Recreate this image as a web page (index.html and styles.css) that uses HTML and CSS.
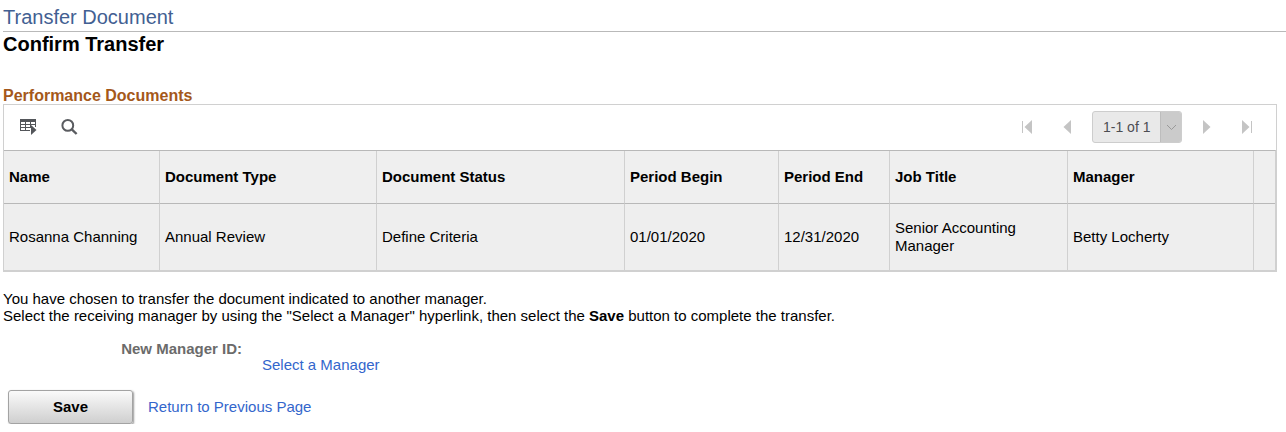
FILE: index.html
```html
<!DOCTYPE html>
<html lang="en">
<head>
<meta charset="utf-8">
<title>Transfer Document</title>
<link rel="stylesheet" href="styles.css">
</head>
<body>
<main class="page">
  <h1 class="page-title">Transfer Document</h1>
  <h2 class="page-subtitle">Confirm Transfer</h2>

  <section class="documents">
    <h3 class="group-title" id="documents-title">Performance Documents</h3>
    <div class="grid">
      <div class="toolbar">
        <div class="tools">
          <button class="icon-button" type="button" aria-label="Grid actions">
            <svg width="17" height="16" viewBox="0 0 17 16" fill="#53565a">
              <path d="M0 0H16V3H0ZM0 3H1V12H0ZM5 3H6V12H5ZM10 3H11V9H10ZM15 3H16V8H15ZM1 5H15V6H1ZM1 8H10V9H1ZM1 11H10V12H1Z"/>
              <path d="M11 6L16.500 11L11 16Z"/>
            </svg>
          </button>
          <button class="icon-button" type="button" aria-label="Find">
            <svg width="17" height="16" viewBox="0 0 17 16" fill="none" stroke="#5a5c60">
              <circle cx="6.8" cy="6.4" r="5.4" stroke-width="2"/>
              <path d="M10.8 10.4L15.6 15" stroke-width="2.4"/>
            </svg>
          </button>
        </div>
        <nav class="pager" aria-label="Rows">
          <div class="page-buttons">
            <button class="page-button" type="button" aria-label="First" disabled>
              <svg width="12" height="14" viewBox="0 0 12 14" fill="#c4c4c4"><path d="M1 1H2V13H1ZM11 0V14L3.500 7Z"/></svg>
            </button>
            <button class="page-button" type="button" aria-label="Previous" disabled>
              <svg width="12" height="14" viewBox="0 0 12 14" fill="#c4c4c4"><path d="M10 0V14L2.500 7Z"/></svg>
            </button>
          </div>
          <div class="range">
            <select class="range-select" aria-label="Row range" disabled><option>1-1 of 1</option></select>
            <span class="range-arrow">
              <svg width="11" height="7" viewBox="0 0 11 7" fill="none" stroke="#999"><path d="M1 1L5.500 5.500L10 1"/></svg>
            </span>
          </div>
          <div class="page-buttons">
            <button class="page-button" type="button" aria-label="Next" disabled>
              <svg width="12" height="14" viewBox="0 0 12 14" fill="#c4c4c4"><path d="M2 0V14L9.500 7Z"/></svg>
            </button>
            <button class="page-button" type="button" aria-label="Last" disabled>
              <svg width="12" height="14" viewBox="0 0 12 14" fill="#c4c4c4"><path d="M10 1H11V13H10ZM1 0V14L8.500 7Z"/></svg>
            </button>
          </div>
        </nav>
      </div>
      <table class="table" aria-labelledby="documents-title">
        <colgroup>
          <col class="col-name"><col class="col-type"><col class="col-status"><col class="col-begin">
          <col class="col-end"><col class="col-job"><col class="col-manager"><col class="col-extra">
        </colgroup>
        <thead>
          <tr>
            <th scope="col">Name</th>
            <th scope="col">Document Type</th>
            <th scope="col">Document Status</th>
            <th scope="col">Period Begin</th>
            <th scope="col">Period End</th>
            <th scope="col">Job Title</th>
            <th scope="col">Manager</th>
            <td></td>
          </tr>
        </thead>
        <tbody>
          <tr>
            <td>Rosanna Channing</td>
            <td>Annual Review</td>
            <td>Define Criteria</td>
            <td>01/01/2020</td>
            <td>12/31/2020</td>
            <td>Senior Accounting Manager</td>
            <td>Betty Locherty</td>
            <td></td>
          </tr>
        </tbody>
      </table>
    </div>
  </section>

  <p class="instructions">You have chosen to transfer the document indicated to another manager.<br>
    Select the receiving manager by using the "Select a Manager" hyperlink, then select the <b>Save</b> button to complete the transfer.</p>

  <div class="manager">
    <span class="manager-label">New Manager ID:</span>
    <a class="link manager-link" href="#select">Select a Manager</a>
  </div>

  <div class="actions">
    <button class="save" type="button">Save</button>
    <a class="link" href="#previous">Return to Previous Page</a>
  </div>
</main>
</body>
</html>
```
FILE: styles.css
```css
* { box-sizing: border-box; }

body {
  margin: 0;
  background: #fff;
  color: #000;
  font: 15px/17px "Liberation Sans", Arial, sans-serif;
}

h1, h2, h3, p { margin: 0; }

button, select { font: inherit; }

.page { padding: 3px 0 0 3px; }

.page-title {
  border-bottom: 1px solid #b9b9b9;
  color: #426092;
  font-size: 20px;
  font-weight: normal;
  line-height: 28px;
}

.page-subtitle {
  font-size: 20px;
  line-height: 24px;
}

.documents {
  margin: 31px 9px 0 0;
}

.group-title {
  color: #a4581a;
  font-size: 16px;
  line-height: 17px;
}

.grid { border: 1px solid #d0d0d0; border-bottom: 0; }

.toolbar {
  display: flex;
  align-items: center;
  justify-content: space-between;
  height: 45px;
  padding: 0 23px 1px 16px;
}

.tools, .pager, .page-buttons {
  display: flex;
  align-items: center;
}

.tools { gap: 24px; }

.pager { gap: 19px; }

.page-buttons { gap: 28px; }

.icon-button, .page-button {
  display: flex;
  padding: 0;
  border: 0;
  background: none;
}

.range {
  display: flex;
  height: 32px;
  border: 1px solid #cdcdcd;
  border-radius: 3px;
  background: #e9e9e9;
  overflow: hidden;
}

.range-select {
  width: 67px;
  padding: 0 0 0 10px;
  border: 0;
  background: none;
  color: #4c4d52;
  font-size: 14px;
  opacity: 1;
  appearance: none;
}

.range-arrow {
  display: flex;
  align-items: center;
  justify-content: center;
  width: 21px;
  border-left: 1px solid #bdbdbd;
  background: #cbcbcb;
}

.table {
  width: 100%;
  table-layout: fixed;
  border-spacing: 0;
  border-top: 1px solid #b8b8b8;
  border-right: 1px solid #d0d0d0;
  border-bottom: 2px solid #d0d0d0;
  background: #eee;
}

.col-name { width: 155px; }
.col-type { width: 217px; }
.col-status { width: 248px; }
.col-begin { width: 154px; }
.col-end { width: 111px; }
.col-job { width: 178px; }
.col-manager { width: 186px; }
.col-extra { width: 22px; }

.table th, .table td {
  padding: 0 5px;
  border-left: 1px solid #d0d0d0;
  text-align: left;
  line-height: 18px;
}

.table tr > :first-child { border-left: 0; }

.table thead th, .table thead td {
  height: 53px;
  border-bottom: 1px solid #b8b8b8;
  background: #efefef;
}

.table tbody td { height: 66px; }

.instructions { margin-top: 18px; }

.manager {
  display: grid;
  grid-template-columns: 239px auto;
  justify-content: start;
  column-gap: 20px;
  margin-top: 17px;
  line-height: 16px;
}

.manager-label {
  color: #6b6b6b;
  font-weight: bold;
  text-align: right;
}

.manager-link { grid-area: 2 / 2; }

.link {
  color: #3366cc;
  text-decoration: none;
}

.actions {
  display: flex;
  align-items: center;
  gap: 15px;
  margin: 17px 0 0 5px;
  line-height: 16px;
}

.save {
  width: 125px;
  height: 34px;
  border: 1px solid #a3a3a3;
  border-radius: 3px;
  background: linear-gradient(#fafafa, #cfcfcf);
  box-shadow: 1px 1px 2px #999;
  color: #000;
  font-weight: bold;
}
```
